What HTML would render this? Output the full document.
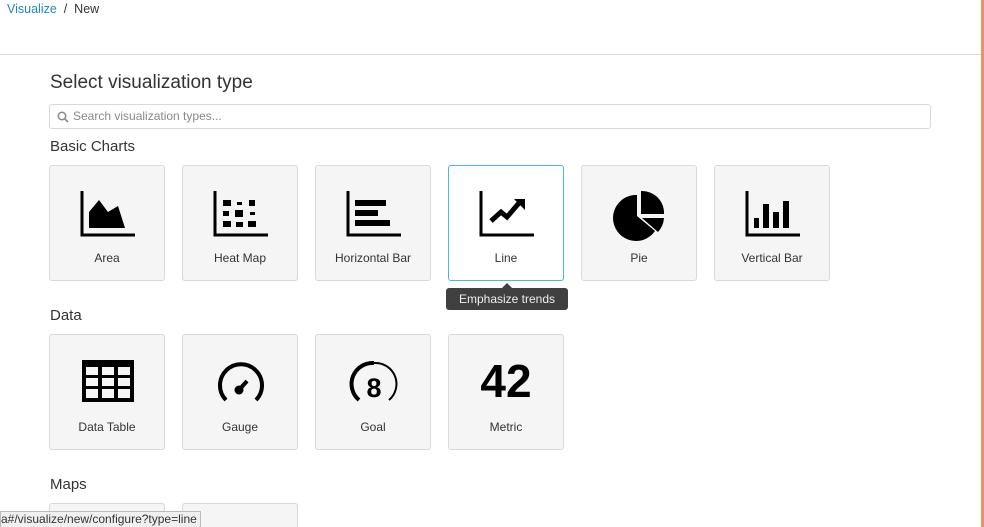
<!DOCTYPE html>
<html style="height:527px;overflow:hidden"><head><style>
html,body{height:527px;overflow:hidden}
body{margin:0;width:984px;background:#fff;font-family:"Liberation Sans",sans-serif;position:relative;color:#222}
.bc{position:absolute;left:7px;top:2px;font-size:12.5px;color:#333}
.bc a{color:#1f8ab5}
.hl{position:absolute;left:0;top:54px;width:981px;height:1px;background:#d9d9d9}
.ob{position:absolute;right:0;top:0;width:3px;height:527px;background:#f0906a}
h1{position:absolute;left:50px;top:72px;margin:0;font-weight:normal;font-size:19px;color:#333}
.search{position:absolute;left:49px;top:104px;border:1px solid #d9d9d9;border-radius:3px;font-size:12px;color:#888;line-height:23px;box-sizing:border-box;width:882px;height:25px}
.search span{position:absolute;left:23px;top:0}
.sec{position:absolute;left:50px;font-size:15px;color:#333}
.card{position:absolute;width:116px;height:116px;box-sizing:border-box;border:1px solid #d9d9d9;border-radius:3px;background:#f5f5f5;text-align:center}
.card.sel{background:#fff;border-color:#4cb4e8}
.card svg{position:absolute;left:30px;top:19px}
.card .l{position:absolute;left:0;right:0;top:85px;font-size:12px;color:#333}
.tip{position:absolute;left:446px;top:288px;width:122px;height:22px;background:#404040;color:#eee;font-size:12px;line-height:22px;text-align:center;border-radius:3px}
.tip:before{content:"";position:absolute;left:56px;top:-5px;border:5px solid transparent;border-top:0;border-bottom-color:#404040}
.url{position:absolute;left:0;top:511px;height:15px;padding:0 3px 0 0;background:#f0f0f0;border:1px solid #bbb;font-size:12px;line-height:15px;color:#333;z-index:5}
</style></head><body>
<div class="bc"><a>Visualize</a> &nbsp;/&nbsp; New</div>
<div class="hl"></div><div class="ob"></div>
<h1>Select visualization type</h1>
<div class="search"><svg style="position:absolute;left:7px;top:6px" width="12" height="12" viewBox="0 0 12 12"><circle cx="5" cy="5" r="3.7" fill="none" stroke="#888" stroke-width="1.5"/><path d="M8 8l3 3" stroke="#888" stroke-width="1.6"/></svg><span>Search visualization types...</span></div>
<div class="sec" style="top:138px">Basic Charts</div>
<div class="sec" style="top:307px">Data</div>
<div class="sec" style="top:476px">Maps</div>

<div class="card" style="left:49px;top:165px"><svg width="56" height="56" viewBox="0 0 56 56"><path d="M2 6v44h53" fill="none" stroke="#000" stroke-width="3"/><path d="M9 43V27l10-12 9 12 10-6 7 22z"/></svg><div class="l">Area</div></div>
<div class="card" style="left:182px;top:165px"><svg width="56" height="56" viewBox="0 0 56 56"><path d="M2 6v44h53" fill="none" stroke="#000" stroke-width="3"/><rect x="10" y="15" width="8" height="6"/><rect x="24" y="17" width="5" height="3"/><rect x="36" y="15" width="6" height="6"/><rect x="10" y="26" width="6" height="5"/><rect x="22" y="25" width="8" height="7"/><rect x="37" y="27" width="5" height="3"/><rect x="10" y="36" width="8" height="6"/><rect x="23" y="37" width="7" height="5"/><rect x="35" y="36" width="8" height="6"/></svg><div class="l">Heat Map</div></div>
<div class="card" style="left:315px;top:165px"><svg width="56" height="56" viewBox="0 0 56 56"><path d="M2 6v44h53" fill="none" stroke="#000" stroke-width="3"/><rect x="9" y="15" width="31" height="6"/><rect x="9" y="25" width="23" height="6"/><rect x="9" y="35" width="35" height="6"/></svg><div class="l">Horizontal Bar</div></div>
<div class="card sel" style="left:448px;top:165px"><svg width="56" height="56" viewBox="0 0 56 56"><path d="M2 6v44h53" fill="none" stroke="#000" stroke-width="3"/><path d="M12 36l10-9 6 5 12-14" fill="none" stroke="#000" stroke-width="5"/><path d="M35 14h11v11z"/></svg><div class="l">Line</div></div>
<div class="card" style="left:581px;top:165px"><svg width="56" height="56" viewBox="0 0 56 56"><path d="M25 10A23 23 0 1 0 43 46L25 31z"/><path d="M29 6A22 22 0 0 1 52 29H29z"/><path d="M30 33h22a23 23 0 0 1-6 14z"/></svg><div class="l">Pie</div></div>
<div class="card" style="left:714px;top:165px"><svg width="56" height="56" viewBox="0 0 56 56"><path d="M2 6v44h53" fill="none" stroke="#000" stroke-width="3"/><rect x="9" y="33" width="5" height="10"/><rect x="18" y="19" width="6" height="24"/><rect x="28" y="27" width="6" height="16"/><rect x="38" y="16" width="6" height="27"/></svg><div class="l">Vertical Bar</div></div>

<div class="card" style="left:49px;top:334px"><svg width="56" height="56" viewBox="0 0 56 56"><rect x="2" y="6" width="52" height="42"/><g fill="#f5f5f5"><rect x="6" y="13" width="12" height="8"/><rect x="22" y="13" width="12" height="8"/><rect x="38" y="13" width="12" height="8"/><rect x="6" y="24" width="12" height="8"/><rect x="22" y="24" width="12" height="8"/><rect x="38" y="24" width="12" height="8"/><rect x="6" y="35" width="12" height="9"/><rect x="22" y="35" width="12" height="9"/><rect x="38" y="35" width="12" height="9"/></g></svg><div class="l">Data Table</div></div>
<div class="card" style="left:182px;top:334px"><svg width="56" height="56" viewBox="0 0 56 56"><path d="M13 46A21 21 0 1 1 43 46" fill="none" stroke="#000" stroke-width="4"/><circle cx="26" cy="36" r="4.5"/><path d="M26 36L34 27" stroke="#000" stroke-width="4"/></svg><div class="l">Gauge</div></div>
<div class="card" style="left:315px;top:334px"><svg width="56" height="56" viewBox="0 0 56 56"><path d="M13 46A21 21 0 0 1 28 9" fill="none" stroke="#000" stroke-width="4"/><path d="M28 9A21 21 0 0 1 43 46" fill="none" stroke="#000" stroke-width="2"/><text x="28" y="43" text-anchor="middle" font-family="Liberation Sans" font-weight="bold" font-size="27">8</text></svg><div class="l">Goal</div></div>
<div class="card" style="left:448px;top:334px"><div style="position:absolute;left:0;right:0;top:16px;font-size:46px;font-weight:bold;line-height:60px;color:#000">42</div><div class="l">Metric</div></div>

<div class="card" style="left:49px;top:503px;height:24px;border-bottom:0;border-radius:3px 3px 0 0"></div>
<div class="card" style="left:182px;top:503px;height:24px;border-bottom:0;border-radius:3px 3px 0 0"></div>
<div class="tip">Emphasize trends</div>
<div class="url">a#/visualize/new/configure?type=line</div>
</body></html>
